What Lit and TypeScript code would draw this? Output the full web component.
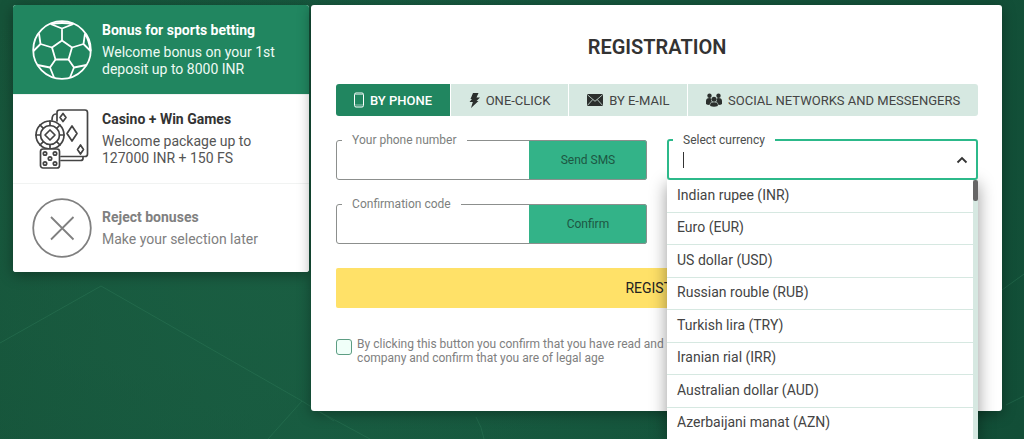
import { LitElement, html, css, svg } from "lit";
import { customElement, property, state } from "lit/decorators.js";
import { classMap } from "lit/directives/class-map.js";

const ballIcon = html`<svg class="pic" viewBox="0 0 60 60" fill="none" stroke="currentColor" stroke-width="1.8" stroke-linejoin="round" aria-hidden="true">
  <circle cx="30" cy="30" r="28.8"/>
  <path d="M30 20.5 40 27.5 36.5 39.5H23.5L20 27.5Z"/>
  <path d="M30 20.5V8.500M18.500 4 30 8.500 41.500 4M18.500 4Q30 2 41.500 4"/>
  <path d="M40 27.500 51.500 24M53 13.500 51.500 24 58.500 31M53 13.500Q57 20 58.500 31"/>
  <path d="M20 27.500 8.500 24M7 13.500 8.500 24 1.500 31"/>
  <path d="M36.500 39.500 42 47.500M54.500 45 42 47.500 38 57.500"/>
  <path d="M23.500 39.500 18 47.500M5.500 45 18 47.500 22 57.500"/>
</svg>`;

const pips = [[13, 54.5], [23, 54.5], [18, 49.5], [13, 44.5], [23, 44.5]];
const casinoIcon = html`<svg class="pic casino" viewBox="0 0 60 60" fill="none" stroke="currentColor" stroke-width="1.7" stroke-linejoin="round" stroke-linecap="round" aria-hidden="true">
  <path d="M25 12V3.500Q25 1 27.500 1H53Q55.500 1 55.500 3.500V45Q55.500 47.500 53 47.500H29"/>
  <path d="M51 48V49.500Q51 51.500 48.500 51.500H29M24 5Q20 5 20 11"/>
  <path d="m31 4.500 3 4-3 4-3-4zM40 17l5 7.500-5 7.500-5-7.500zM48.500 36l3 4.500-3 4.500-3-4.500z"/>
  <circle cx="18" cy="26" r="14" fill="#fff"/><circle cx="18" cy="26" r="9.500"/>
  <path d="M18 21 23 26 18 31 13 26Z"/>
  <path d="M18 12v4.500M18 35.500V39M4 26h4.500M27.500 26H32M8 16l3.400 3.400M28 16l-3.400 3.400M8 36l3.400-3.400M28 36l-3.400-3.400"/>
  <rect x="8.500" y="40" width="19" height="19" rx="2.500" fill="#fff"/>
  ${pips.map(([x, y]) => svg`<circle cx=${x} cy=${y} r="1.700"/>`)}
</svg>`;

const rejectIcon = html`<svg class="pic" viewBox="0 0 60 60" fill="none" stroke="currentColor" stroke-width="1.800" aria-hidden="true">
  <circle cx="30" cy="30" r="28.800"/><path d="M19 19 41.500 41.500M41.500 19 19 41.500"/>
</svg>`;

const phoneIcon = html`<svg width="10" height="16" viewBox="0 0 10 16" fill="none" stroke="currentColor" aria-hidden="true"><rect x=".5" y="1" width="9" height="14" rx="1.500"/><path d="M1 2.500h8M1 13h8" stroke-opacity=".5"/></svg>`;
const boltIcon = html`<svg width="11" height="16" viewBox="0 0 11 16" fill="currentColor" aria-hidden="true"><path d="M4 1h5.500L7.500 5.500H11L7.500 9H9.500L2 16 3.800 10H.500L3 7H1.500Z"/></svg>`;
const mailIcon = html`<svg width="16" height="12" viewBox="0 0 16 12" aria-hidden="true"><rect width="16" height="12" rx="1" fill="currentColor"/><path d="M.500.800 8 7.300 15.500.800M.500 11.300 5.800 5.500M15.500 11.300 10.200 5.500" fill="none" stroke="#d6e8e1" stroke-width=".8"/></svg>`;
const peopleIcon = html`<svg width="16" height="14" viewBox="0 0 16 14" fill="currentColor" aria-hidden="true"><circle cx="3.500" cy="2.700" r="2.200"/><circle cx="12.500" cy="2.700" r="2.200"/><path d="M0 11V8Q0 5 3.500 5 5 5 5.500 6 4.500 8 6 9 3.500 9.500 3.500 12 1 12 0 11ZM16 11V8Q16 5 12.500 5 11 5 10.500 6 11.500 8 10 9 12.500 9.500 12.500 12 15 12 16 11Z"/><circle cx="8" cy="6.300" r="2.500"/><path d="M4.200 13V11.500Q4.200 9.200 8 9.200T11.800 11.500V13Q8 14.500 4.200 13Z"/></svg>`;
const chevronIcon = html`<svg width="12" height="8" viewBox="0 0 12 8" fill="none" stroke="currentColor" stroke-width="1.800" aria-hidden="true"><path d="M1.500 6.500 6 2 10.500 6.500"/></svg>`;

const bonuses = [
  { title: "Bonus for sports betting", text: "Welcome bonus on your 1st deposit up to 8000 INR", icon: ballIcon, muted: false },
  { title: "Casino + Win Games", text: "Welcome package up to 127000 INR + 150 FS", icon: casinoIcon, muted: false },
  { title: "Reject bonuses", text: "Make your selection later", icon: rejectIcon, muted: true },
];

const methods = [
  { name: "BY PHONE", icon: phoneIcon },
  { name: "ONE-CLICK", icon: boltIcon },
  { name: "BY E-MAIL", icon: mailIcon },
  { name: "SOCIAL NETWORKS AND MESSENGERS", icon: peopleIcon },
];

const currencies = [
  "Indian rupee (INR)", "Euro (EUR)", "US dollar (USD)", "Russian rouble (RUB)",
  "Turkish lira (TRY)", "Iranian rial (IRR)", "Australian dollar (AUD)", "Azerbaijani manat (AZN)",
];

const base = css`
  *, *::before, *::after { box-sizing: border-box; }
  button, input { font: inherit; color: inherit; margin: 0; }
  button { border: 0; padding: 0; cursor: pointer; }
`;

const outlined = css`
  :host { display: block; }
  .box { position: relative; display: flex; height: 40px; border-radius: 3px; background: #fff; }
  .outline { position: absolute; inset: -7px 0 0; margin: 0; padding: 0 5px; min-width: 0; border: 1px solid #8c8f8d; border-radius: 3px; pointer-events: none; }
  legend { padding: 0 10px; font-size: 12px; line-height: 14px; color: #7d7f7e; }
  input { flex: 1; min-width: 0; border: 0; padding: 0 15px; background: none; outline: none; font-size: 14px; }
`;

@customElement("code-field")
class CodeField extends LitElement {
  @property() label = "";
  @property() action = "";

  static styles = [base, outlined, css`
    .send { width: 38%; border-radius: 0 3px 3px 0; background: #33b388; color: #1d5743; font-size: 12px; }
  `];

  render() {
    return html`<div class="box">
      <input id="value" type="text">
      <button class="send" type="button">${this.action}</button>
      <fieldset class="outline"><legend><label for="value">${this.label}</label></legend></fieldset>
    </div>`;
  }
}

@customElement("currency-field")
class CurrencyField extends LitElement {
  static styles = [base, outlined, css`
    .box { z-index: 2; align-items: center; padding-right: 10px; color: #333; }
    .outline { border: 2px solid #2cb98a; padding: 0 4px; }
    legend { color: #4c4e4d; }
    .caret { width: 1px; height: 16px; margin-left: 16px; background: #333; }
    .toggle { display: flex; background: none; }
    .menu { position: absolute; z-index: 1; top: 100%; left: 0; right: 0; height: 260px; display: flex; background: #fff; box-shadow: 0 4px 16px rgba(0, 0, 0, .4); }
    .wrap { position: relative; }
    .list { flex: 1; display: grid; grid-auto-rows: 12.5%; height: 100%; margin: 0; padding: 0; list-style: none; }
    .option { display: flex; align-items: center; padding: 0 10px 2px; border-bottom: 1px solid #d6e8e1; font-size: 14px; color: #444; }
    .track { width: 5px; background: #d6e8e1; }
    .thumb { height: 21px; border-radius: 2px; background: #666; }
  `];

  render() {
    return html`<div class="wrap">
      <div class="box">
        <span class="caret"></span>
        <input id="currency" type="text" role="combobox" aria-expanded="true" aria-controls="list">
        <button class="toggle" type="button" aria-label="Close list">${chevronIcon}</button>
        <fieldset class="outline"><legend><label for="currency">Select currency</label></legend></fieldset>
      </div>
      <div class="menu">
        <ul class="list" id="list" role="listbox">
          ${currencies.map((c) => html`<li class="option" role="option">${c}</li>`)}
        </ul>
        <div class="track"><div class="thumb"></div></div>
      </div>
    </div>`;
  }
}

@customElement("app-root")
class AppRoot extends LitElement {
  @state() bonus = 0;
  @state() method = 0;

  static styles = [base, css`
    :host { display: block; font-family: Roboto, "Liberation Sans", sans-serif; color: #333; }
    .page { position: relative; min-height: 100vh; padding: 5px 22px 28px 13px; display: grid; grid-template-columns: minmax(0, 3fr) minmax(0, 7fr); gap: 2px; align-items: start;
      background: radial-gradient(ellipse 500px 300px at 30% 60%, #1a5e42, transparent), linear-gradient(100deg, #165339, #175a40 35%, #124e37); }
    .lines { position: absolute; inset: 0; width: 100%; height: 100%; }
    .bonuses { border-radius: 3px; overflow: hidden; background: #fff; }
    .shade { position: relative; border-radius: 3px; box-shadow: 0 3px 14px rgba(0, 0, 0, .35); }
    .bonus { width: 100%; min-height: 89px; display: flex; align-items: center; gap: 10px; padding: 0 19px; background: #fff; text-align: left; }
    .bonus + .bonus { border-top: 1px solid #f1f3f2; }
    .bonus.muted { color: #808080; }
    .bonus.on { background: #218660; color: #fff; }
    .pic { flex: none; width: 60px; height: 60px; }
    .casino { color: #444; }
    .words { display: grid; gap: 5px; font-size: 14px; line-height: 17px; }
    .words b { font-weight: 700; }
    .bonus .text { color: #555; }
    .bonus.muted .text { color: #808080; }
    .bonus.on .text { color: #eefaf4; }
    .card { padding: 30px 24px 46px 25px; border-radius: 3px; background: #fff; }
    h1 { margin: 0 0 25px; font-size: 20px; line-height: 24px; font-weight: 600; text-align: center; }
    .methods { display: flex; gap: 1px; margin-bottom: 24px; border-radius: 3px; overflow: hidden; }
    .method { flex: 1 1 auto; height: 32px; display: flex; align-items: center; justify-content: center; gap: 6px; padding: 0 16px; background: #d6e8e1; font-size: 13px; color: #444; white-space: nowrap; }
    .method svg { color: #2b2f2d; }
    .method.on, .method.on svg { background: #218660; color: #fff; }
    .method.on { font-weight: 500; }
    .fields { display: grid; grid-template-columns: 1fr 1fr; gap: 24px 20px; margin-bottom: 24px; }
    .submit { width: 100%; height: 40px; border-radius: 2px; background: #ffe168; color: #222; font-size: 14px; }
    .consent { display: flex; gap: 5px; margin-top: 29px; font-size: 12px; line-height: 14px; color: #808080; }
    .consent input { flex: none; appearance: none; width: 16px; height: 16px; margin-top: 2px; border: 1px solid #5d9d83; border-radius: 3px; background: #f0fff9; }
  `];

  render() {
    return html`<main class="page">
      <svg class="lines" fill="none" stroke="#2f7a59" stroke-opacity=".45" aria-hidden="true">
        <path d="M0 343 101 286 302 401 268 439M302 401l32 20M320 412l50 27M476 417q6 10 8 22M1002 290l22-16M1006 405l18-9"/>
      </svg>
      <div class="shade"><nav class="bonuses" aria-label="Bonuses">
        ${bonuses.map((b, i) => html`<button type="button" class=${classMap({ bonus: true, on: i === this.bonus, muted: b.muted })}
          aria-pressed=${i === this.bonus} @click=${() => (this.bonus = i)}>
          ${b.icon}<span class="words"><b>${b.title}</b><span class="text">${b.text}</span></span>
        </button>`)}
      </nav></div>
      <form class="card shade" @submit=${(e: Event) => e.preventDefault()}>
        <h1>REGISTRATION</h1>
        <div class="methods">
          ${methods.map((m, i) => html`<button type="button" class=${classMap({ method: true, on: i === this.method })}
            aria-pressed=${i === this.method} @click=${() => (this.method = i)}>${m.icon}<span>${m.name}</span></button>`)}
        </div>
        <div class="fields">
          <code-field label="Your phone number" action="Send SMS"></code-field>
          <currency-field></currency-field>
          <code-field label="Confirmation code" action="Confirm"></code-field>
        </div>
        <button class="submit" type="submit">REGISTER</button>
        <div class="consent">
          <input id="agree" type="checkbox">
          <label for="agree">By clicking this button you confirm that you have read and accept the Terms and Conditions and Privacy Policy of the company and confirm that you are of legal age</label>
        </div>
      </form>
    </main>`;
  }
}
